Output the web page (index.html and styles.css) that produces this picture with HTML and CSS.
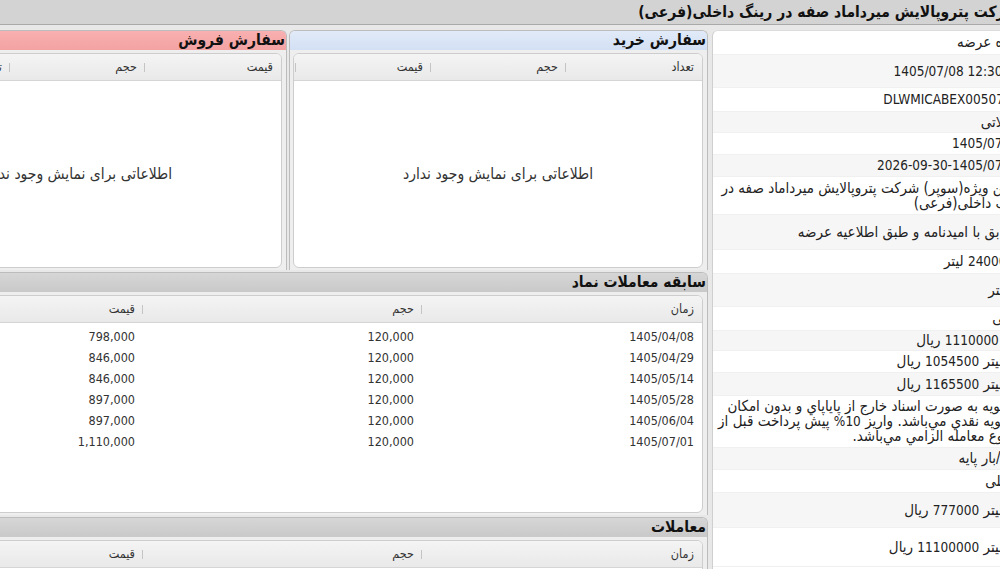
FILE: index.html
```html
<!DOCTYPE html>
<html lang="fa">
<head>
<meta charset="utf-8">
<title>عرضه</title>
<link rel="stylesheet" href="styles.css">
</head>
<body>
<div class="page">
  <div class="titlebar">شرکت پتروپالایش میرداماد صفه در رینگ داخلی(فرعی)</div>
  <div class="main">
    <aside class="info">
      <div class="row h25"><div class="lbl">نوع عرضه</div><div class="val">نحوه عرضه</div></div>
      <div class="row h33 alt"><div class="lbl">زمان عرضه</div><div class="val"><span class="n ltr">1405/07/08 12:30:00</span></div></div>
      <div class="row h24"><div class="lbl">کد عرضه</div><div class="val"><span class="n ltr code">DLWMICABEX00507</span></div></div>
      <div class="row h21 alt"><div class="lbl">نوع قرارداد</div><div class="val"><span class="sh sh-m7">معاملاتی</span></div></div>
      <div class="row h22"><div class="lbl">تاریخ تحویل</div><div class="val"><span class="n ltr">1405/07/30</span></div></div>
      <div class="row h22 alt"><div class="lbl">سررسید</div><div class="val"><span class="n ltr">2026-09-30-1405/07/08</span></div></div>
      <div class="row h38"><div class="lbl">شرح کالا</div><div class="val">بنزین ویژه(سوپر) شرکت پتروپالایش میرداماد صفه در<br>رینگ داخلی(فرعی)</div></div>
      <div class="row h35 alt"><div class="lbl">مشخصات</div><div class="val">مطابق با امیدنامه و طبق اطلاعیه عرضه</div></div>
      <div class="row h25"><div class="lbl">حجم عرضه</div><div class="val"><span class="n">2400000</span> لیتر</div></div>
      <div class="row h33 alt"><div class="lbl">واحد</div><div class="val"><span class="sh sh-p14">لیتر</span></div></div>
      <div class="row h25"><div class="lbl">واحد قیمت</div><div class="val">ریالی</div></div>
      <div class="row h20 alt"><div class="lbl">قیمت پایه</div><div class="val">پایه <span class="n">1110000</span> ریال</div></div>
      <div class="row h22"><div class="lbl">حداقل قیمت</div><div class="val">هر لیتر <span class="n">1054500</span> ریال</div></div>
      <div class="row h23 alt"><div class="lbl">حداکثر قیمت</div><div class="val">هر لیتر <span class="n">1165500</span> ریال</div></div>
      <div class="row h52"><div class="lbl">نحوه تسویه</div><div class="val"><span class="sh sh-p6">تسویه به صورت اسناد خارج از پاياپاي و بدون امكان</span><br><span class="sh sh-p5">تسویه نقدي مي‌باشد. واريز <span class="n">10%</span> پيش پرداخت قبل از</span><br>شروع معامله الزامي مي‌باشد.</div></div>
      <div class="row h22 alt"><div class="lbl">محل تحویل</div><div class="val"><span class="sh sh-m12">تحویل/بار پایه</span></div></div>
      <div class="row h23"><div class="lbl">نوع بازار</div><div class="val"><span class="sh sh-p3">داخلی</span></div></div>
      <div class="row h35 alt"><div class="lbl">قیمت مبنا</div><div class="val">هر لیتر <span class="n">777000</span> ریال</div></div>
      <div class="row h39"><div class="lbl">سقف قیمت</div><div class="val">هر لیتر <span class="n">11100000</span> ریال</div></div>
    </aside>

    <section class="content">
      <div class="orders">
        <div class="panel">
          <div class="phead buy">سفارش خرید</div>
          <div class="pbody">
            <div class="grid">
              <div class="ghead">
                <div class="c c136">تعداد</div>
                <div class="c c135 sep">حجم</div>
                <div class="c c135 sep">قیمت</div>
                <div class="c fill sep"></div>
              </div>
              <div class="empty">اطلاعاتی برای نمایش وجود ندارد</div>
            </div>
          </div>
        </div>
        <div class="panel">
          <div class="phead sell">سفارش فروش</div>
          <div class="pbody">
            <div class="grid">
              <div class="ghead">
                <div class="c c136">قیمت</div>
                <div class="c c135 sep">حجم</div>
                <div class="c c135 sep">تعداد</div>
                <div class="c fill sep"></div>
              </div>
              <div class="empty">اطلاعاتی برای نمایش وجود ندارد</div>
            </div>
          </div>
        </div>
      </div>

      <div class="panel history">
        <div class="phead gray">سابقه معاملات نماد</div>
        <div class="pbody">
          <div class="grid">
            <div class="ghead">
              <div class="c c280">زمان</div>
              <div class="c c279 sep">حجم</div>
              <div class="c fill sep">قیمت</div>
            </div>
            <div class="gbody">
              <div class="grow"><div class="c c280">1405/04/08</div><div class="c c279">120,000</div><div class="c fill">798,000</div></div>
              <div class="grow"><div class="c c280">1405/04/29</div><div class="c c279">120,000</div><div class="c fill">846,000</div></div>
              <div class="grow"><div class="c c280">1405/05/14</div><div class="c c279">120,000</div><div class="c fill">846,000</div></div>
              <div class="grow"><div class="c c280">1405/05/28</div><div class="c c279">120,000</div><div class="c fill">897,000</div></div>
              <div class="grow"><div class="c c280">1405/06/04</div><div class="c c279">120,000</div><div class="c fill">897,000</div></div>
              <div class="grow"><div class="c c280">1405/07/01</div><div class="c c279">120,000</div><div class="c fill">1,110,000</div></div>
            </div>
          </div>
        </div>
      </div>

      <div class="panel trades">
        <div class="phead gray">معاملات</div>
        <div class="pbody">
          <div class="grid">
            <div class="ghead">
              <div class="c c280">زمان</div>
              <div class="c c279 sep">حجم</div>
              <div class="c fill sep">قیمت</div>
            </div>
            <div class="gbody"></div>
          </div>
        </div>
      </div>
    </section>
  </div>
</div>
</body>
</html>
```
FILE: styles.css
```css
html, body {
  margin: 0;
  padding: 0;
  overflow: hidden;
  background: #e8e8e8;
}
body {
  width: 1000px;
  height: 569px;
  font-family: "DejaVu Sans Condensed", "DejaVu Sans", sans-serif;
  font-size: 12px;
  color: #222;
}
.page {
  direction: rtl;
  width: 1292px;
  margin-left: -132px;
}
.titlebar {
  box-sizing: border-box;
  height: 25px;
  background: #d3d3d3;
  border-bottom: 1px solid #a9a9a9;
  display: flex;
  align-items: center;
  padding-right: 141px;
  font-weight: bold;
  font-size: 15.5px;
  color: #111;
  white-space: nowrap;
}
.main {
  display: flex;
  gap: 4px;
  padding-top: 5px;
  align-items: flex-start;
}
/* info table */
.info {
  box-sizing: border-box;
  width: 448px;
  flex: none;
  height: 545px;
  overflow: hidden;
  background: #fff;
  border-left: 1px solid #cfcfcf;
  border-top: 1px solid #dcdcdc;
  border-top-left-radius: 6px;
}
.row {
  display: flex;
  align-items: center;
  box-sizing: border-box;
  border-bottom: 1px solid #f0f0f0;
}
.row.alt { background: #f6f6f6; }
.lbl {
  width: 128px;
  flex: none;
  padding-right: 6px;
  color: #333;
  white-space: nowrap;
  overflow: hidden;
}
.val {
  flex: 1;
  padding: 0 4px 0 6px;
  font-size: 15px;
  line-height: 15px;
  white-space: nowrap;
  color: #222;
}
.n { font-size: 13.5px; }
.ltr { direction: ltr; unicode-bidi: isolate; display: inline-block; }
.code { margin-right: 18px; }
.sh { display: inline-block; }
.sh-m12 { margin-right: -12px; }
.sh-m7 { margin-right: -7px; }
.sh-p3 { margin-right: 3px; }
.sh-p5 { margin-right: 5px; }
.sh-p6 { margin-right: 6px; }
.sh-p14 { margin-right: 14px; }
.h20 { height: 20px; }
.h21 { height: 21px; }
.h22 { height: 22px; }
.h23 { height: 23px; }
.h24 { height: 24px; }
.h25 { height: 24px; }
.h33 { height: 33px; }
.h35 { height: 35px; }
.h38 { height: 38px; }
.h39 { height: 39px; }
.h52 { height: 52px; }

/* content */
.content {
  width: 840px;
  flex: none;
  display: flex;
  flex-direction: column;
  gap: 2px;
}
.orders {
  display: flex;
  gap: 2px;
  height: 240px;
}
.orders .panel { width: 419px; }
.panel {
  box-sizing: border-box;
  display: flex;
  flex-direction: column;
  background: #eeeeee;
  border: 1px solid #bcbcbc;
  border-bottom: none;
  border-radius: 6px 6px 0 0;
}
.history { height: 243px; }
.trades { height: 60px; }
.phead {
  flex: none;
  height: 19px;
  line-height: 19px;
  padding-right: 1px;
  font-weight: bold;
  font-size: 15.5px;
  color: #111;
  border-radius: 5px 5px 0 0;
  white-space: nowrap;
  overflow: hidden;
}
.phead.buy { background: linear-gradient(#e1eaf8, #d3e0f4); }
.phead.sell { background: linear-gradient(#f9b0b0, #f3a2a2); }
.phead.gray { background: linear-gradient(#d6d6d6, #c9c9c9); }
.pbody {
  flex: 1;
  display: flex;
  padding: 3px 4px 2px 3px;
  min-height: 0;
}
.grid {
  flex: 1;
  display: flex;
  flex-direction: column;
  background: #fff;
  border: 1px solid #cdcdcd;
  border-radius: 6px;
  overflow: hidden;
}
.ghead {
  flex: none;
  display: flex;
  height: 26px;
  align-items: stretch;
  background: linear-gradient(#f4f4f4, #e9e9e9);
  border-bottom: 1px solid #d5d5d5;
  color: #333;
  font-size: 12.5px;
}
.ghead .c { line-height: 26px; }
.c {
  box-sizing: border-box;
  flex: none;
  padding-right: 8px;
  white-space: nowrap;
  overflow: hidden;
}
.c.sep {
  background: linear-gradient(#c4c4c4, #c4c4c4) right center / 1px 9px no-repeat;
}
.c136 { width: 136px; }
.c135 { width: 135px; }
.c280 { width: 280px; }
.c279 { width: 279px; }
.c.fill { flex: 1; }
.empty {
  flex: 1;
  display: flex;
  align-items: center;
  justify-content: center;
  color: #333;
  font-size: 15.5px;
}
.gbody {
  flex: 1;
  padding-top: 3px;
}
.grow {
  display: flex;
  height: 21px;
  line-height: 21px;
  color: #333;
  font-size: 12.5px;
}
```
